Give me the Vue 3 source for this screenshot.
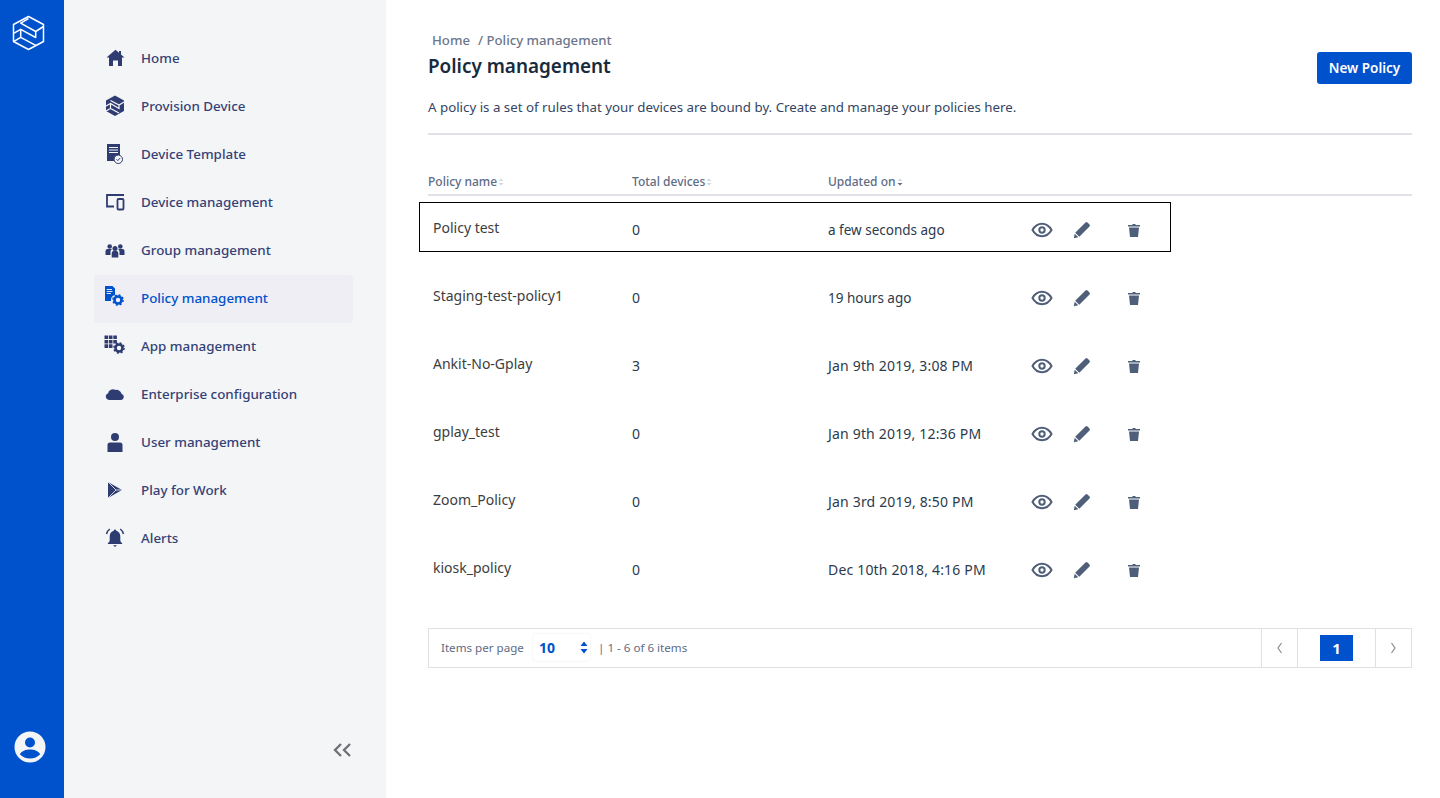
<script setup>
const nav = [
  { id: 'home', label: 'Home' },
  { id: 'provision', label: 'Provision Device' },
  { id: 'template', label: 'Device Template' },
  { id: 'device', label: 'Device management' },
  { id: 'group', label: 'Group management' },
  { id: 'policy', label: 'Policy management', active: true },
  { id: 'app', label: 'App management' },
  { id: 'cloud', label: 'Enterprise configuration' },
  { id: 'user', label: 'User management' },
  { id: 'play', label: 'Play for Work' },
  { id: 'alerts', label: 'Alerts' }
]
const rows = [
  { name: 'Policy test', total: 0, updated: 'a few seconds ago', focused: true, relative: true },
  { name: 'Staging-test-policy1', total: 0, updated: '19 hours ago', relative: true },
  { name: 'Ankit-No-Gplay', total: 3, updated: 'Jan 9th 2019, 3:08 PM' },
  { name: 'gplay_test', total: 0, updated: 'Jan 9th 2019, 12:36 PM' },
  { name: 'Zoom_Policy', total: 0, updated: 'Jan 3rd 2019, 8:50 PM' },
  { name: 'kiosk_policy', total: 0, updated: 'Dec 10th 2018, 4:16 PM' }
]
</script>

<template>
  <div class="page">
    <aside class="rail">
      <svg class="logo" width="34" height="36" viewBox="0 0 34 36" fill="none" stroke="#fff" stroke-width="1.500" stroke-linejoin="round">
        <path d="M16.500 1.500 31.500 9.500V26.500L16.500 34.500 1.500 26.500V9.500Z" />
        <path d="M16.500 3.500 8.700 8.200 23.700 16.500 31.500 11.500" />
        <path d="M1.500 18.300 8.700 14.300 23.700 22.500V16.500" />
        <path d="M8.700 14.300V22.300M1.500 26.700 8.700 22.300 23.700 30.300" />
      </svg>
      <svg class="avatar" width="32" height="32" viewBox="0 0 32 32">
        <circle cx="16" cy="16" r="15.500" fill="#f4f5f7" />
        <circle cx="16" cy="11.500" r="5" fill="#0052cc" />
        <path d="M5.800 23.200C8 19.600 12 18.400 16 18.400s8 1.200 10.200 4.800C23.600 26 20 27.500 16 27.500S8.400 26 5.800 23.200Z" fill="#0052cc" />
      </svg>
    </aside>

    <nav class="side">
      <ul class="menu">
        <li v-for="item in nav" :key="item.id" class="menu-item" :class="{ active: item.active }">
          <span class="menu-icon">
            <svg width="24" height="24" viewBox="0 0 24 24" class="glyph">
              <path v-if="item.id === 'home'" d="M12.500 3.700 16 6.700V5h2v3.400L21.500 11.500H19V20H15V14.500H10V20H6V11.500H3.500Z" />
              <template v-else-if="item.id === 'provision'">
                <path d="M12 1.500 21 6.500V17L12 22 3 17V6.500Z" />
                <path d="M7.500 6.500 16 11 21 8M3 12 7.500 9.500 16 14.500V11M7.500 9.500V14.500M3 17 7.500 14.500 16 19" fill="none" stroke="#f4f5f7" stroke-width="1.200" />
              </template>
              <template v-else-if="item.id === 'template'">
                <path d="M4 2H17V13.500A5 5 0 0 0 11.500 19H4Z" />
                <path d="M6 5.500H15M6 8H15M6 10.500H15" fill="none" stroke="#f4f5f7" stroke-width="1" />
                <circle cx="15.300" cy="17.300" r="4.200" fill="#f4f5f7" stroke="#2f3c72" stroke-width="1" />
                <path d="M13.500 17.300 14.800 18.600 17.100 16.100" fill="none" stroke="#2f3c72" stroke-width="1" />
              </template>
              <g v-else-if="item.id === 'device'" fill="none" stroke="#2f3c72" stroke-width="1.800">
                <path d="M11 16.500H4V5H21" />
                <rect x="14.500" y="9" width="6" height="10.500" rx="1" />
              </g>
              <template v-else-if="item.id === 'group'">
                <circle cx="6.700" cy="8.500" r="2.300" /><circle cx="17.300" cy="8.500" r="2.300" /><circle cx="12" cy="10.500" r="2.500" />
                <path d="M2.500 17V13a2 2 0 0 1 2-2h4.500a3.500 3.500 0 0 0-1.500 3v3ZM21.500 17V13a2 2 0 0 0-2-2H15a3.500 3.500 0 0 1 1.500 3v3ZM8.700 19.500V15a2 2 0 0 1 2-2h2.600a2 2 0 0 1 2 2v4.500Z" />
              </template>
              <template v-else-if="item.id === 'policy'">
                <path d="M2 0H9.500L12 2.500V9A5.500 5.500 0 0 0 8 15H2Z" fill="#0052cc" />
                <path d="M3.700 3.500H9M3.700 5.500H9.500M3.700 7.500H8" stroke="#f4f5f7" stroke-width=".9" fill="none" />
                <circle cx="15" cy="14" r="3.500" fill="none" stroke="#0052cc" stroke-width="2.600" />
                <circle cx="15" cy="14" r="5" fill="none" stroke="#0052cc" stroke-width="1.600" stroke-dasharray="2 1.930" />
              </template>
              <template v-else-if="item.id === 'app'">
                <path d="M1.500 1.500h3.600v3.600H1.500ZM5.900 1.500h3.600v3.600H5.900ZM10.300 1.500h3.600v3.600H10.300ZM1.500 5.900h3.600v3.600H1.500ZM5.900 5.900h3.600v3.600H5.900ZM10.300 5.900h3.600v3.600H10.300ZM1.500 10.300h3.600v3.600H1.500ZM5.900 10.300h3.600v3.600H5.900Z" />
                <circle cx="16" cy="14" r="3.500" fill="none" stroke="#2f3c72" stroke-width="2.600" />
                <circle cx="16" cy="14" r="5" fill="none" stroke="#2f3c72" stroke-width="1.600" stroke-dasharray="2 1.930" />
              </template>
              <path v-else-if="item.id === 'cloud'" d="M6 18A3.300 3.300 0 0 1 5 11.600 5 5 0 0 1 12.500 8 5 5 0 0 1 18.500 11.800 3.200 3.200 0 0 1 18.300 18Z" />
              <template v-else-if="item.id === 'user'">
                <circle cx="12" cy="7" r="4" />
                <path d="M4.500 22V15a2.500 2.500 0 0 1 2.500-2.500h10A2.500 2.500 0 0 1 19.500 15V22Z" />
              </template>
              <template v-else-if="item.id === 'play'">
                <path d="M5 4 19 12 5 20Z" />
                <path d="M5 4 13 12 5 20M13 12H20" stroke="#f4f5f7" stroke-width=".8" fill="none" />
              </template>
              <template v-else-if="item.id === 'alerts'">
                <path d="M12 3.500a1.200 1.200 0 0 1 1.200 1.300C15.800 5.500 17.300 7.700 17.300 10.500V15L19.500 18H4.500L6.700 15V10.500C6.700 7.700 8.200 5.500 10.800 4.800A1.200 1.200 0 0 1 12 3.500Z" />
                <path d="M10 19.200h4L12 21Z" />
                <path d="M6.800 3A8 8 0 0 0 3.500 8M17.200 3A8 8 0 0 1 20.500 8" fill="none" stroke="#2f3c72" stroke-width="1.500" />
              </template>
            </svg>
          </span>
          <span class="menu-label">{{ item.label }}</span>
        </li>
      </ul>
      <div class="collapse">
        <svg width="18" height="14" viewBox="0 0 18 14" fill="none" stroke="#6e6e73" stroke-width="2.300">
          <path d="M8 1 2 7l6 6M17 1l-6 6 6 6" />
        </svg>
      </div>
    </nav>

    <main class="main">
      <header class="head">
        <div class="head-text">
          <div class="crumbs"><span class="crumb-home">Home</span><span>/ Policy management</span></div>
          <h1 class="title">Policy management</h1>
        </div>
        <button class="primary" type="button">New Policy</button>
      </header>
      <p class="intro">A policy is a set of rules that your devices are bound by. Create and manage your policies here.</p>

      <div class="thead">
        <div class="th">Policy name
          <svg width="6" height="8" viewBox="0 0 6 8" fill="#d3d8e0"><path d="M3 .500 5.500 3H.500ZM3 7.500.500 5h5Z" /></svg>
        </div>
        <div class="th">Total devices
          <svg width="6" height="8" viewBox="0 0 6 8" fill="#d3d8e0"><path d="M3 .500 5.500 3H.500ZM3 7.500.500 5h5Z" /></svg>
        </div>
        <div class="th">Updated on
          <svg width="6" height="8" viewBox="0 0 6 8"><path d="M3 .500 5.500 3H.500Z" fill="#d3d8e0" /><path d="M3 7.500.500 5h5Z" fill="#5e6c84" /></svg>
        </div>
      </div>

      <div v-for="row in rows" :key="row.name" class="row" :class="{ focused: row.focused }">
        <div class="cell-name">{{ row.name }}</div>
        <div class="cell">{{ row.total }}</div>
        <div class="cell" :class="row.relative ? 'time-relative' : 'time-date'">{{ row.updated }}</div>
        <div class="actions">
          <svg width="22" height="16" viewBox="0 0 22 16" fill="none" stroke="#505f79" stroke-width="2">
            <path d="M1.500 8C4 3.500 7.300 1.800 11 1.800S18 3.500 20.500 8C18 12.500 14.700 14.200 11 14.200S4 12.500 1.500 8Z" />
            <circle cx="11" cy="8" r="2.700" />
          </svg>
          <svg class="pencil" width="18" height="18" viewBox="0 0 18 18" fill="#505f79">
            <path d="M12.500 1.500a1.500 1.500 0 0 1 2 0l2 2a1.500 1.500 0 0 1 0 2L6.300 15.800 2.200 11.700ZM1.700 12.700 5.300 16.300.8 17.200Z" />
          </svg>
          <svg class="trash" width="12" height="13" viewBox="0 0 12 13" fill="#505f79">
            <path d="M4.500 0H7.500V1H12V2.500H0V1H4.500ZM1 3.500H11L10 13H2Z" />
          </svg>
        </div>
      </div>

      <footer class="pager">
        <div class="pager-left">
          <span class="per-label">Items per page</span>
          <span class="select">
            <b>10</b>
            <svg width="8" height="13" viewBox="0 0 8 13" fill="#0052cc"><path d="M4 .500 7.500 5H.500ZM4 12.500.500 8h7Z" /></svg>
          </span>
          <span class="range">| 1 - 6 of 6 items</span>
        </div>
        <div class="pager-btn">
          <svg width="7" height="12" viewBox="0 0 7 12" fill="none" stroke="#8a8a8a" stroke-width="1.200"><path d="M5.500 1 2 6l3.500 5" /></svg>
        </div>
        <div class="pager-page"><span class="page-on">1</span></div>
        <div class="pager-btn">
          <svg width="7" height="12" viewBox="0 0 7 12" fill="none" stroke="#8a8a8a" stroke-width="1.200"><path d="M1.500 1 5 6l-3.500 5" /></svg>
        </div>
      </footer>
    </main>
  </div>
</template>

<style>
html, body { margin: 0; background: #fff; }
</style>

<style scoped>
.page {
  display: flex;
  height: 798px;
  font-family: "Noto Sans", "Liberation Sans", sans-serif;
  overflow: hidden;
}
.rail {
  width: 64px;
  flex: none;
  background: #0052cc;
  display: flex;
  flex-direction: column;
  align-items: flex-start;
  justify-content: space-between;
  padding: 15px 0 35px 12px;
  box-sizing: border-box;
}
.avatar { margin-left: 2px; }
.side {
  width: 322px;
  flex: none;
  background: #f4f5f7;
  box-sizing: border-box;
  padding: 35px 33px 0 30px;
  display: flex;
  flex-direction: column;
}
.menu { list-style: none; margin: 0; padding: 0; }
.menu-item {
  height: 48px;
  display: flex;
  align-items: center;
  border-radius: 3px;
  color: #344276;
  font-size: 13.4px;
  font-weight: 500;
}
.menu-item.active { background: #eeeef4; color: #0052cc; }
.menu-icon { width: 47px; padding-left: 9px; padding-bottom: 2px; box-sizing: border-box; flex: none; display: flex; }
.menu-label { margin-bottom: 2px; }
.glyph { fill: #2f3c72; display: block; }
.collapse { margin-top: 180px; padding-left: 239px; line-height: 0; }
.main {
  flex: 1;
  min-width: 0;
  padding: 0 28px 0 42px;
  color: #253858;
}
.head { display: flex; justify-content: space-between; align-items: flex-end; height: 84px; }
.head-text { padding-bottom: 5px; }
.crumbs { font-size: 13.2px; color: #6b778c; font-weight: 500; padding-left: 4px; line-height: 20px; }
.crumb-home { margin-right: 8px; }
.title { margin: 3px 0 0; font-size: 18.9px; font-weight: 600; color: #172b3d; line-height: 26px; }
.primary {
  width: 95px;
  height: 32px;
  border: 0;
  border-radius: 3px;
  background: #0052cc;
  color: #fff;
  font: 600 13.5px "Noto Sans", "Liberation Sans", sans-serif;
  padding: 0;
}
.intro {
  margin: 0;
  height: 51px;
  box-sizing: border-box;
  padding-top: 13px;
  font-size: 13.3px;
  line-height: 20px;
  color: #344563;
  border-bottom: 2px solid #dfe1e6;
}
.thead {
  display: grid;
  grid-template-columns: 204px 196px 1fr;
  height: 61px;
  box-sizing: border-box;
  padding-top: 39px;
  border-bottom: 2px solid #dfe1e6;
  margin-bottom: 6px;
  font-size: 12px;
  font-weight: 500;
  color: #5e6c84;
}
.th { line-height: 16px; display: flex; align-items: center; gap: 1px; height: 16px; }
.row {
  display: grid;
  grid-template-columns: 212px 196px 203px 1fr;
  width: 752px;
  height: 50px;
  margin: 0 0 18px -9px;
  box-sizing: border-box;
  border: 1px solid transparent;
  align-items: center;
  font-size: 14px;
  color: #2c3a4b;
}
.row.focused { border-color: #000; }
.cell-name { padding-left: 13px; color: #3d3d3d; }
.cell { margin-top: 4px; }
.time-relative { font-size: 13.5px; margin-top: 5px; }
.time-date { letter-spacing: .18px; }
.actions { display: flex; align-items: center; margin-top: 6px; }
.pencil { margin-left: 20px; }
.trash { margin-left: 37px; }
.pager {
  display: flex;
  align-items: stretch;
  height: 40px;
  box-sizing: border-box;
  border: 1px solid #e0e0e0;
  margin-top: 36px;
  font-size: 11.6px;
  color: #5e6c84;
}
.pager-left { flex: 1; display: flex; align-items: center; padding: 0 0 2px 12px; }
.per-label { width: 91px; flex: none; white-space: nowrap; }
.select {
  width: 59px;
  height: 29px;
  margin: 0 7px 0 0;
  box-sizing: border-box;
  padding: 0 2px 0 6px;
  display: flex;
  align-items: center;
  justify-content: space-between;
  border: 1px solid #f8f8f8;
  border-radius: 4px;
  color: #0052cc;
  font-size: 14px;
}
.select b { font-weight: 700; }
.pager-btn { width: 36px; box-sizing: border-box; display: flex; align-items: center; justify-content: center; border-left: 1px solid #e0e0e0; }
.pager-page { box-sizing: border-box; width: 78px; display: flex; align-items: center; justify-content: center; border-left: 1px solid #e0e0e0; }
.page-on {
  width: 33px;
  height: 26px;
  background: #0052cc;
  color: #fff;
  font-size: 15px;
  font-weight: 700;
  display: flex;
  align-items: center;
  justify-content: center;
}
</style>
